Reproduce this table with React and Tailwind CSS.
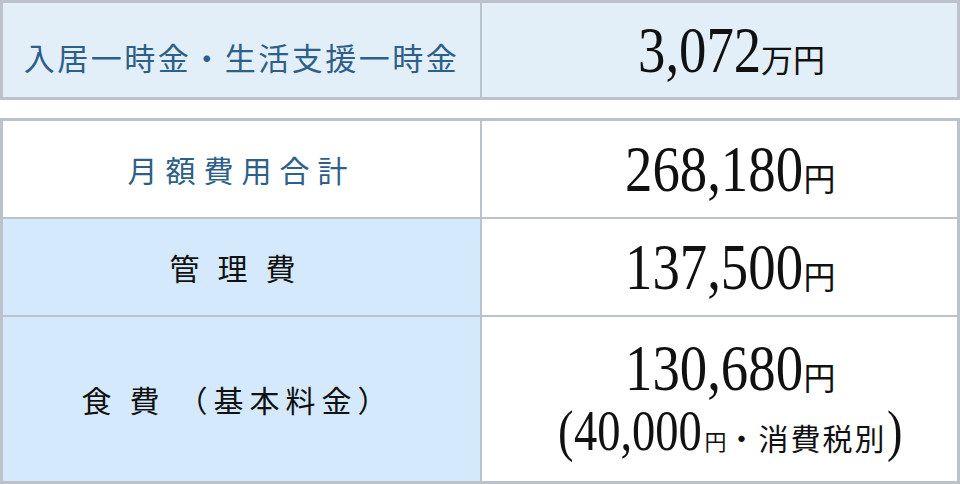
const jp = "font-['Noto_Sans_CJK_JP',sans-serif]";
const serif = "font-['Liberation_Serif','Times_New_Roman',serif]";

function Squeeze({ box, text }) {
  // Mincho-style numerals are narrower than Times, so squeeze them horizontally
  return (
    <span className={`inline-block whitespace-nowrap ${box}`}>
      <span className="inline-block origin-left scale-x-[0.83]">{text}</span>
    </span>
  );
}

function Amount({ value, unit = "円", width = "w-[178px]" }) {
  return (
    <div className="flex items-baseline leading-none text-[#111]">
      <span className={`${serif} text-[66px] leading-none`}>
        <Squeeze box={width} text={value} />
      </span>
      <span className={`${jp} text-[32px] leading-none`}>{unit}</span>
    </div>
  );
}

export default function App() {
  return (
    <div className="w-[960px] h-[484px] bg-white flex flex-col">
      {/* 一時金 */}
      <div className="h-[100px] border-[3px] border-[#bcc2ca] bg-[#e2eff9] grid grid-cols-[479px_1fr]">
        <div className="border-r-2 border-[#bcc2ca] flex items-center justify-center pt-[12px]">
          <span className={`${jp} text-[31px] tracking-[2.5px] leading-none text-[#2d5f88]`}>
            入居一時金・生活支援一時金
          </span>
        </div>
        <div className="flex items-center justify-center pl-[24px]">
          <Amount value="3,072" unit="万円" width="w-[123px]" />
        </div>
      </div>

      {/* 月額費用 */}
      <div className="mt-[18px] h-[366px] border-[3px] border-[#bcc2ca] grid grid-cols-[479px_1fr] grid-rows-[98px_98px_1fr]">
        <div className="border-r-2 border-b-2 border-[#bcc2ca] bg-white flex items-center justify-center">
          <span className={`${jp} text-[30px] tracking-[8px] leading-none text-[#2d5f88]`}>
            月額費用合計
          </span>
        </div>
        <div className="border-b-2 border-[#bcc2ca] bg-white flex items-center justify-center pl-[22px]">
          <Amount value="268,180" />
        </div>

        <div className="border-r-2 border-b-2 border-[#bcc2ca] bg-[#d4e9fb] flex items-center justify-center">
          <span className={`${jp} text-[30px] tracking-[18px] leading-none text-[#111]`}>管理費</span>
        </div>
        <div className="border-b-2 border-[#bcc2ca] bg-white flex items-center justify-center pl-[22px]">
          <Amount value="137,500" />
        </div>

        <div className="border-r-2 border-[#bcc2ca] bg-[#d4e9fb] flex items-center justify-center pr-[8px]">
          <span className={`${jp} text-[30px] leading-none text-[#111] flex`}>
            <span className="tracking-[18px]">食費</span>
            <span className="tracking-[6px]">（基本料金）</span>
          </span>
        </div>
        <div className="bg-white flex flex-col items-center justify-center pl-[22px] pb-[4px]">
          <Amount value="130,680" />
          <div className="flex items-baseline leading-none text-[#111] mt-[2px]">
            <span className={`${serif} text-[56px] leading-none`}>
              <Squeeze box="w-[16px]" text="(" />
              <Squeeze box="w-[130px]" text="40,000" />
            </span>
            <span className={`${jp} text-[22px] leading-none`}>円</span>
            <span className={`${jp} text-[30px] tracking-[2px] leading-none`}>・消費税別</span>
            <span className={`${serif} text-[56px] leading-none`}>
              <Squeeze box="w-[16px]" text=")" />
            </span>
          </div>
        </div>
      </div>
    </div>
  );
}
